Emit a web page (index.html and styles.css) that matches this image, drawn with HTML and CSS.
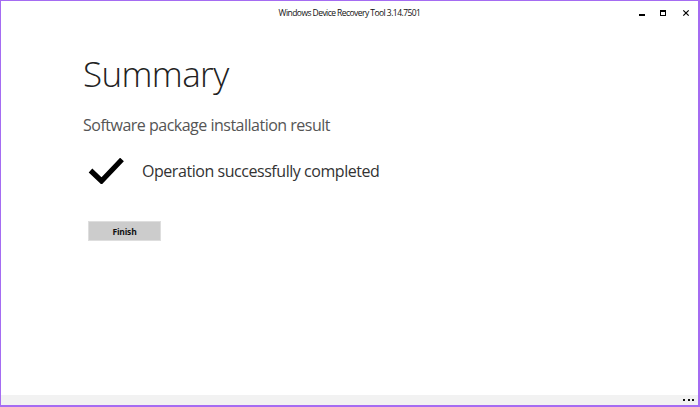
FILE: index.html
```html
<!DOCTYPE html>
<html lang="en">
<head>
<meta charset="utf-8">
<link rel="stylesheet" href="styles.css">
</head>
<body>
<div class="window">
  <header class="titlebar">
    <div class="spacer"></div>
    <div class="title">Windows Device Recovery Tool 3.14.7501</div>
    <div class="controls">
      <span class="ctl min"><svg width="8" height="8" viewBox="0 0 8 8"><rect x="1" y="5" width="6" height="2" fill="#000"/></svg></span>
      <span class="ctl max"><svg width="8" height="8" viewBox="0 0 8 8"><rect x="1.5" y="1.5" width="5" height="5" fill="none" stroke="#000" stroke-width="1"/><rect x="1" y="1" width="6" height="2" fill="#000"/></svg></span>
      <span class="ctl close"><svg width="8" height="8" viewBox="0 0 8 8"><path d="M1.3 1.3 L6.7 6.7 M6.7 1.3 L1.3 6.7" stroke="#000" stroke-width="1.2"/></svg></span>
    </div>
  </header>
  <main class="content">
    <h1 class="heading">Summary</h1>
    <p class="subtitle">Software package installation result</p>
    <div class="status">
      <svg class="check" width="36" height="26" viewBox="0 0 36 26"><path d="M2.5 12.5 L13.5 23 L34 1.5" fill="none" stroke="#000" stroke-width="5.2" stroke-linejoin="miter" stroke-miterlimit="10"/></svg>
      <span class="status-text">Operation successfully completed</span>
    </div>
    <button class="finish">Finish</button>
  </main>
  <footer class="appbar">
    <span class="dots"><i></i><i></i><i></i></span>
  </footer>
</div>
</body>
</html>
```
FILE: styles.css
```css
html, body { margin: 0; padding: 0; }
body {
  width: 700px; height: 407px; overflow: hidden;
  font-family: "Open Sans", "Noto Sans", sans-serif;
  background: #fff;
}
.window {
  box-sizing: border-box;
  width: 700px; height: 407px;
  border: 1px solid #a56cf2;
  border-right-width: 2px;
  border-bottom-width: 2px;
  display: flex; flex-direction: column;
  background: #fff;
}
.titlebar {
  height: 29px;
  display: grid;
  grid-template-columns: 1fr auto 1fr;
  align-items: start;
}
.title {
  font-size: 8.5px;
  line-height: 12px;
  padding-top: 6px;
  color: #111;
  letter-spacing: -0.55px;
}
.controls {
  justify-self: end;
  display: flex;
  gap: 13px;
  padding-top: 8px;
  padding-right: 8px;
}
.ctl { width: 8px; height: 8px; display: block; }
.ctl svg { display: block; }
.ctl.close { margin-left: 2px; }
.content {
  flex: 1;
  padding-left: 82px;
}
.heading {
  margin: 22px 0 0 0;
  font-weight: 300;
  font-size: 35px;
  line-height: 44px;
  letter-spacing: -0.6px;
  color: #222;
}
.subtitle {
  margin: 19px 0 0 0;
  font-size: 16px;
  font-weight: 400;
  line-height: 20px;
  letter-spacing: -0.5px;
  color: #555;
}
.status {
  display: flex; align-items: center;
  margin-top: 23px;
  margin-left: 5px;
  height: 26px;
}
.check { display: block; }
.status-text {
  margin-left: 18px;
  font-size: 16px;
  line-height: 20px;
  letter-spacing: -0.45px;
  color: #333;
}
.finish {
  display: block;
  margin: 37px 0 0 5px;
  width: 73px; height: 20px;
  background: #cccccc;
  border: 1px solid #dedede;
  font-family: "Open Sans", "Noto Sans", sans-serif;
  font-weight: 700;
  font-size: 8.5px;
  letter-spacing: -0.2px;
  color: #111;
  padding: 0;
}
.appbar {
  height: 10px;
  background: #f2f2f2;
  display: flex; justify-content: flex-end; align-items: center;
  padding-right: 4px;
}
.dots { display: flex; gap: 2.5px; }
.dots i { display: block; width: 2px; height: 2px; background: #111; }
```
